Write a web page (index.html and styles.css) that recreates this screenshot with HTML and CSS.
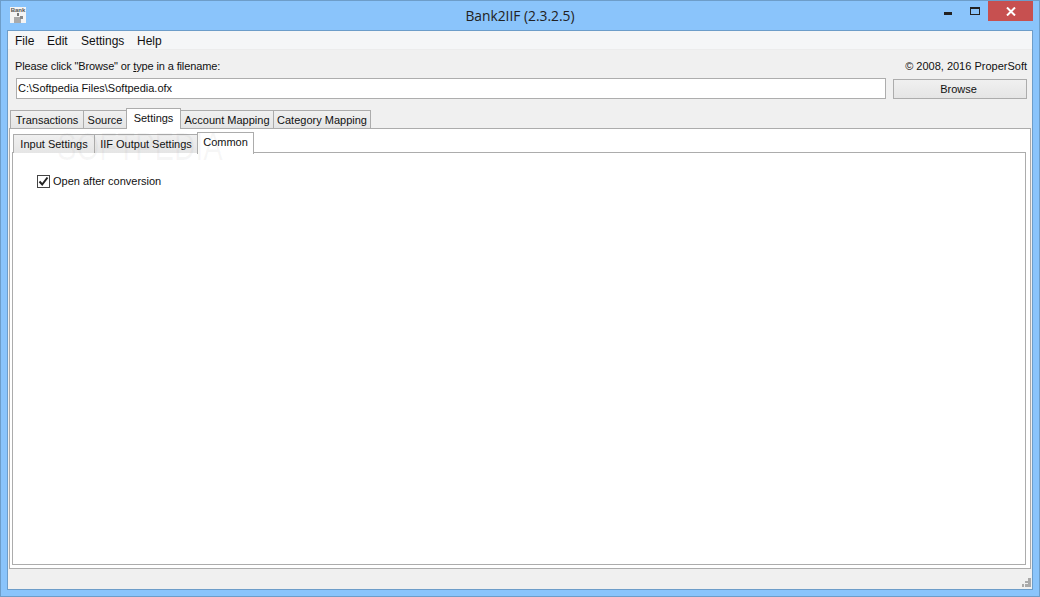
FILE: index.html
```html
<!DOCTYPE html>
<html lang="en">
<head>
    <meta charset="UTF-8">
    <title>Bank2IIF (2.3.2.5)</title>
    <link rel="stylesheet" href="styles.css">
</head>
<body>
    <div class="window">
        <div class="titlebar">
            <div class="app-icon">
                <span class="app-icon-bank">Bank</span>
                <svg width="14" height="10" viewBox="0 0 14 10"><rect x="6" y="0" width="2" height="3" fill="#777"/><rect x="3" y="4" width="7" height="6" fill="#aaa"/><rect x="9" y="3" width="3" height="3" fill="#888"/></svg>
            </div>
            <div class="title">Bank2IIF (2.3.2.5)</div>
            <div class="controls">
                <div class="btn-min"><span></span></div>
                <div class="btn-max"><span></span></div>
                <div class="btn-close">
                    <svg width="10" height="9" viewBox="0 0 10 9"><path d="M1 0.5 L9 8.5 M9 0.5 L1 8.5" stroke="#fff" stroke-width="2" fill="none"/></svg>
                </div>
            </div>
        </div>

        <div class="client">
            <div class="menubar">
                <span class="menu-file">File</span>
                <span class="menu-edit">Edit</span>
                <span class="menu-settings">Settings</span>
                <span class="menu-help">Help</span>
            </div>

            <div class="file-area">
                <div class="file-labels">
                    <span class="file-prompt">Please click "Browse" or <u>t</u>ype in a filename:</span>
                    <span>© 2008, 2016 ProperSoft</span>
                </div>
                <div class="file-row">
                    <div class="file-input">C:\Softpedia Files\Softpedia.ofx</div>
                    <div class="browse">Browse</div>
                </div>
            </div>

            <div class="main-tabs">
                <div class="tab">Transactions</div>
                <div class="tab">Source</div>
                <div class="tab tab-active">Settings</div>
                <div class="tab">Account Mapping</div>
                <div class="tab">Category Mapping</div>
            </div>
            <div class="main-pane">
                <div class="sub-tabs">
                    <div class="tab">Input Settings</div>
                    <div class="tab">IIF Output Settings</div>
                    <div class="tab tab-active">Common</div>
                </div>
                <div class="sub-pane">
                    <label class="check-row">
                        <span class="checkbox">
                            <svg width="11" height="11" viewBox="0 0 11 11"><path d="M1.5 5.5 L4.2 8.5 L9.5 1.5" stroke="#222" stroke-width="2" fill="none"/></svg>
                        </span>
                        Open after conversion
                    </label>
                </div>
            </div>

            <div class="statusbar">
                <svg class="grip" width="9" height="9" viewBox="0 0 9 9" fill="#aaa">
                    <rect x="6" y="0" width="3" height="3"/>
                    <rect x="3" y="3" width="3" height="2"/><rect x="6" y="3" width="3" height="3"/>
                    <rect x="0" y="6" width="2" height="3"/><rect x="3" y="6" width="3" height="3"/><rect x="6" y="6" width="3" height="3"/>
                </svg>
            </div>
            <div class="watermark">SOFTPEDIA</div>
        </div>
    </div>
</body>
</html>
```

FILE: styles.css
```css
* {
    box-sizing: border-box;
}
html, body {
    margin: 0;
    height: 100%;
    overflow: hidden;
}
body {
    font-family: "Liberation Sans", Arial, sans-serif;
    font-size: 11px;
    color: #111;
}
.window {
    width: 1040px;
    height: 597px;
    background-color: #8ac4fb;
    border: 1px solid #6d9dc9;
    display: flex;
    flex-direction: column;
    padding: 0 6px 6px;
}

/* title bar */
.titlebar {
    height: 29px;
    flex: none;
    position: relative;
}
.app-icon {
    position: absolute;
    left: 3px;
    top: 6px;
    width: 16px;
    height: 16px;
    background-color: #f4f4f4;
    display: flex;
    flex-direction: column;
    align-items: center;
}
.app-icon-bank {
    font-size: 6px;
    line-height: 6px;
    font-weight: bold;
    color: #555;
}
.title {
    text-align: center;
    font-family: "Open Sans", sans-serif;
    font-size: 13.8px;
    line-height: 30px;
    color: #222;
}
.controls {
    position: absolute;
    right: 0;
    top: 0;
    display: flex;
    height: 20px;
}
.btn-min, .btn-max {
    width: 26px;
    display: flex;
    justify-content: center;
}
.btn-max {
    margin-left: 1px;
}
.btn-min span {
    width: 8px;
    height: 3px;
    margin-top: 11px;
    background-color: #222;
}
.btn-max span {
    width: 10px;
    height: 8px;
    margin-top: 6px;
    border: 1px solid #222;
    border-top-width: 2px;
}
.btn-close {
    width: 45px;
    background-color: #c75050;
    display: flex;
    justify-content: center;
    align-items: center;
}

/* client area */
.client {
    flex: 1;
    min-height: 0;
    position: relative;
    background-color: #f0f0f0;
    border: 1px solid #6d9dc9;
    display: flex;
    flex-direction: column;
}
.menubar {
    height: 19px;
    flex: none;
    background-color: #f5f6f7;
    border-bottom: 1px solid #ececec;
    font-size: 12px;
    line-height: 20px;
    display: flex;
}
.menubar span {
    display: block;
}
.menu-file { margin-left: 7px; width: 32px; }
.menu-edit { width: 34px; }
.menu-settings { width: 56px; }
.menu-help { width: 30px; }

.file-area {
    padding: 9px 5px 0 8px;
    height: 58px;
    flex: none;
}
.file-labels {
    display: flex;
    justify-content: space-between;
    line-height: 14px;
}
.file-prompt {
    margin-left: -1px;
    letter-spacing: -0.13px;
}
.file-row {
    display: flex;
    margin-top: 5px;
    gap: 7px;
}
.file-input {
    width: 870px;
    height: 21px;
    background-color: #fff;
    border: 1px solid #adadad;
    padding-left: 1px;
    line-height: 18px;
}
.browse {
    width: 134px;
    height: 20px;
    margin-top: 1px;
    padding-right: 3px;
    background: linear-gradient(#f0f0f0, #e5e5e5);
    border: 1px solid #acacac;
    text-align: center;
    line-height: 18px;
}

/* tabs */
.main-tabs, .sub-tabs {
    display: grid;
    align-items: end;
    position: relative;
    z-index: 1;
    justify-content: start;
}
.main-tabs {
    grid-template-columns: 73px 43px 54px 93px 97px;
    height: 20px;
    flex: none;
    padding-left: 3px;
}
.sub-tabs {
    grid-template-columns: 81px 103px 56px;
    height: 21px;
    margin: 3px 0 -1px 2px;
}
.tab {
    height: 18px;
    background: linear-gradient(#f0f0f0, #e5e5e5);
    border: 1px solid #acacac;
    border-bottom: none;
    margin-left: -1px;
    text-align: center;
    line-height: 18px;
    white-space: nowrap;
}
.sub-tabs .tab {
    height: 19px;
}
.tab-active,
.sub-tabs .tab-active {
    height: 21px;
    margin-bottom: -1px;
    background: #fff;
}
.sub-tabs .tab-active {
    height: 22px;
    line-height: 19px;
}
.main-pane {
    height: 441px;
    flex: none;
    margin: 0 1px;
    border: 1px solid #acacac;
    background-color: #fff;
    display: flex;
    flex-direction: column;
    padding: 0 4px 3px 2px;
}
.sub-pane {
    flex: 1;
    min-height: 0;
    border: 1px solid #acacac;
    background-color: #fff;
    padding: 22px 0 0 24px;
}
.check-row {
    display: flex;
    align-items: center;
    gap: 3px;
    line-height: 13px;
}
.checkbox {
    width: 13px;
    height: 13px;
    border: 1px solid #444;
    background-color: #fff;
    display: flex;
    justify-content: center;
    align-items: center;
}
.statusbar {
    flex: 1;
    min-height: 0;
    display: flex;
    justify-content: flex-end;
    align-items: flex-end;
    padding: 0 1px 2px 0;
}

/* site stamp, faint over the tabs */
.watermark {
    position: absolute;
    left: 49px;
    top: 94px;
    font-size: 39px;
    line-height: 44px;
    color: rgba(120, 120, 120, 0.06);
    transform: scaleX(0.75);
    transform-origin: left top;
    pointer-events: none;
    z-index: 2;
}
```
